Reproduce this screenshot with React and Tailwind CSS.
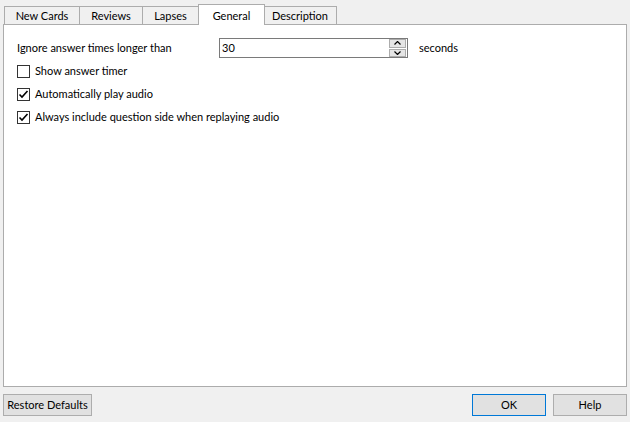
import React from "react";

const font = { fontFamily: 'Lato, "Liberation Sans", sans-serif' };

function Tab({ w, children, selected }) {
  if (selected) {
    return (
      <div
        className="relative z-10 -ml-px -mr-px flex h-[21px] items-start justify-center whitespace-nowrap border border-b-0 border-[#acacac] bg-white pt-[3px] text-[11px] text-black"
        style={{ width: w }}
      >
        {children}
      </div>
    );
  }
  return (
    <div
      className="-ml-px flex h-[19px] items-center justify-center whitespace-nowrap border border-b-0 border-[#acacac] bg-[#f0f0f0] text-[11px] text-black first:ml-0"
      style={{ width: w }}
    >
      {children}
    </div>
  );
}

function Check({ checked, label }) {
  return (
    <div className="flex h-[23px] items-center">
      <div className="flex h-[13px] w-[13px] items-center justify-center border border-[#333333] bg-white">
        {checked && (
          <svg width="11" height="11" viewBox="0 0 11 11">
            <path d="M1.5 5.5 L4 8 L9.5 2" fill="none" stroke="#000" strokeWidth="1.6" />
          </svg>
        )}
      </div>
      <span className="ml-[5px] whitespace-nowrap text-[11px] text-black">{label}</span>
    </div>
  );
}

export default function App() {
  return (
    <div className="flex h-[422px] w-[630px] flex-col bg-[#f0f0f0]" style={font}>
      <div className="flex h-[25px] items-end pl-[4px] pt-[4px]">
        <Tab w="76px">New Cards</Tab>
        <Tab w="64px">Reviews</Tab>
        <Tab w="57px">Lapses</Tab>
        <Tab w="67px" selected>General</Tab>
        <Tab w="74px">Description</Tab>
      </div>
      <div className="relative -mt-px ml-[3px] mr-[3px] h-[363px] border border-[#acacac] bg-white px-[13px] pt-[13px]">
        <div className="flex h-[20px] items-center">
          <span className="w-[202px] whitespace-nowrap text-[11px] text-black">Ignore answer times longer than</span>
          <div className="flex h-[20px] w-[189px] items-center border border-[#7a7a7a] bg-white">
            <span className="flex-1 pl-[2px] text-[11px] text-black">30</span>
            <div className="mr-px flex h-[18px] w-[17px] flex-col gap-px">
              <div className="flex flex-1 items-center justify-center border border-[#acacac] bg-[#e5e5e5]">
                <svg width="7" height="4" viewBox="0 0 7 4">
                  <path d="M0.5 3.5 L3.5 0.5 L6.5 3.5" fill="none" stroke="#000" strokeWidth="1.2" />
                </svg>
              </div>
              <div className="flex flex-1 items-center justify-center border border-[#acacac] bg-[#e5e5e5]">
                <svg width="7" height="4" viewBox="0 0 7 4">
                  <path d="M0.5 0.5 L3.5 3.5 L6.5 0.5" fill="none" stroke="#000" strokeWidth="1.2" />
                </svg>
              </div>
            </div>
          </div>
          <span className="ml-[11px] text-[11px] text-black">seconds</span>
        </div>
        <div className="mt-[2px]">
          <Check label="Show answer timer" />
          <Check checked label="Automatically play audio" />
          <Check checked label="Always include question side when replaying audio" />
        </div>
      </div>
      <div className="mt-[7px] flex px-[3px]">
        <button className="h-[22px] w-[89px] whitespace-nowrap border border-[#adadad] bg-[#e1e1e1] text-[11px] text-black">
          Restore Defaults
        </button>
        <div className="flex-1" />
        <button className="h-[22px] w-[74px] border border-[#0078d7] bg-[#e1e1e1] text-[11px] text-black">
          OK
        </button>
        <button className="ml-[7px] h-[22px] w-[74px] border border-[#adadad] bg-[#e1e1e1] text-[11px] text-black">
          Help
        </button>
      </div>
    </div>
  );
}
